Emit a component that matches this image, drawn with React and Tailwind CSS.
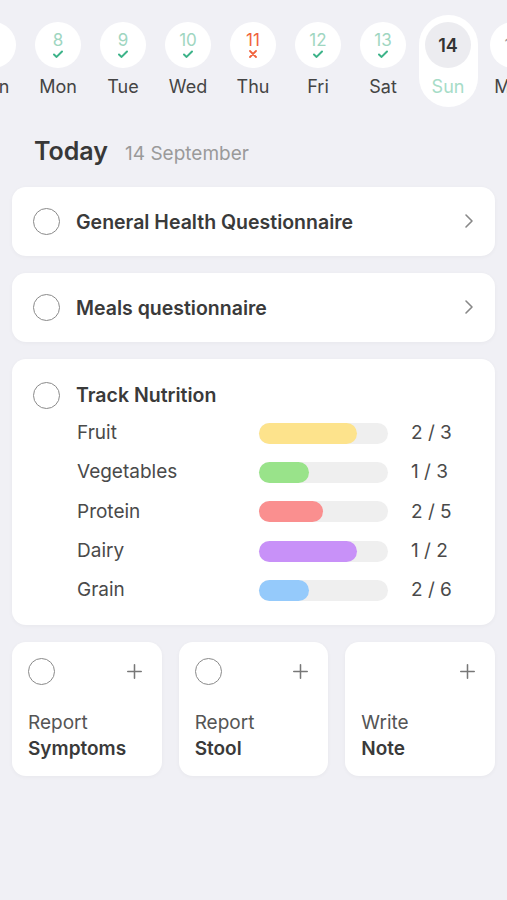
import { ChevronRight, Plus } from "lucide-react"

const days = [
  { n: 7, d: "Sun", state: "done" },
  { n: 8, d: "Mon", state: "done" },
  { n: 9, d: "Tue", state: "done" },
  { n: 10, d: "Wed", state: "done" },
  { n: 11, d: "Thu", state: "missed" },
  { n: 12, d: "Fri", state: "done" },
  { n: 13, d: "Sat", state: "done" },
  { n: 14, d: "Sun", state: "today" },
  { n: 15, d: "Mon", state: "future" },
]

const nutrition = [
  { name: "Fruit", fill: "w-[98px]", color: "bg-[#fde38c]", value: "2 / 3" },
  { name: "Vegetables", fill: "w-[50px]", color: "bg-[#99e38a]", value: "1 / 3" },
  { name: "Protein", fill: "w-[64px]", color: "bg-[#fa8f8f]", value: "2 / 5" },
  { name: "Dairy", fill: "w-[98px]", color: "bg-[#c891f8]", value: "1 / 2" },
  { name: "Grain", fill: "w-[50px]", color: "bg-[#95cafb]", value: "2 / 6" },
]

function Check() {
  return (
    <svg className="h-[10px] w-[12px]" viewBox="0 0 12 10" fill="none" stroke="#3db389" strokeWidth={2} strokeLinecap="round" strokeLinejoin="round">
      <path d="M2 5.5l2.6 2.4L10 2.5" />
    </svg>
  )
}

function Cross() {
  return (
    <svg className="h-[10px] w-[10px]" viewBox="0 0 10 10" fill="none" stroke="#f0623c" strokeWidth={1.8} strokeLinecap="round">
      <path d="M2 2l6 6M8 2l-6 6" />
    </svg>
  )
}

function Ring() {
  return <div className="h-[27px] w-[27px] shrink-0 rounded-full border-[1.5px] border-[#8a8a8a]" />
}

function Day({ day }) {
  if (day.state === "today") {
    return (
      <div className="flex w-[65px] shrink-0 justify-center pt-[15px]">
        <div className="flex h-[92px] w-[59px] flex-col items-center rounded-full bg-white pt-[7px]">
          <div className="grid h-[46px] w-[46px] place-items-center rounded-full bg-[#ececf0] text-[18px] font-semibold text-[#333]">
            {day.n}
          </div>
          <span className="mt-[5px] text-[18px] text-[#a6dcc7]">{day.d}</span>
        </div>
      </div>
    )
  }
  const numColor = day.state === "missed" ? "text-[#f0623c]" : day.state === "future" ? "text-[#999]" : "text-[#9fd6c1]"
  return (
    <div className="flex w-[65px] shrink-0 flex-col items-center pt-[22px]">
      <div className="flex h-[46px] w-[46px] flex-col items-center justify-center rounded-full bg-white">
        <span className={`text-[17px] leading-[18px] ${numColor}`}>{day.n}</span>
        {day.state === "done" && <Check />}
        {day.state === "missed" && <Cross />}
      </div>
      <span className="mt-[5px] text-[18px] text-[#444]">{day.d}</span>
    </div>
  )
}

function QuickCard({ top, bottom, ring }) {
  return (
    <div className="flex h-[134px] flex-1 flex-col rounded-[14px] bg-white px-[16px] pt-[16px] shadow-[0_1px_4px_rgba(0,0,0,0.04)]">
      <div className="flex h-[27px] items-center justify-between">
        {ring ? <Ring /> : <span />}
        <Plus className="h-[23px] w-[23px] text-[#777]" strokeWidth={1.6} />
      </div>
      <div className="mt-[25px] text-[19px] leading-[26px] text-[#555]">{top}</div>
      <div className="text-[19px] font-semibold leading-[26px] text-[#3a3a3a]">{bottom}</div>
    </div>
  )
}

export default function App() {
  return (
    <div className="min-h-[900px] w-[507px] overflow-hidden bg-[#f0f0f5]" style={{ fontFamily: "Inter, 'Liberation Sans', sans-serif" }}>
      <div className="ml-[-39.5px] flex h-[112px]">
        {days.map((d) => (
          <Day key={d.n} day={d} />
        ))}
      </div>

      <div className="flex items-baseline gap-[17px] px-[34px] pt-[21px]">
        <h1 className="text-[25px] font-semibold text-[#383838]">Today</h1>
        <span className="text-[19px] text-[#9a9a9a]">14 September</span>
      </div>

      <div className="mt-[16px] flex flex-col gap-[17px] px-[12px]">
        {["General Health Questionnaire", "Meals questionnaire"].map((t) => (
          <div key={t} className="flex h-[69px] items-center gap-[16px] rounded-[14px] bg-white pl-[21px] pr-[14px] shadow-[0_1px_4px_rgba(0,0,0,0.04)]">
            <Ring />
            <span className="flex-1 pt-[3px] text-[19.5px] font-semibold text-[#3a3a3a]">{t}</span>
            <ChevronRight className="h-[24px] w-[24px] text-[#888]" strokeWidth={1.6} />
          </div>
        ))}

        <div className="rounded-[14px] bg-white pb-[15px] pl-[21px] pr-[14px] pt-[22px] shadow-[0_1px_4px_rgba(0,0,0,0.04)]">
          <div className="flex items-center gap-[16px]">
            <Ring />
            <span className="text-[19.5px] font-semibold text-[#3a3a3a]">Track Nutrition</span>
          </div>
          <div className="mt-[4px] flex flex-col pl-[44px]">
            {nutrition.map((n) => (
              <div key={n.name} className="flex h-[39.3px] items-center">
                <span className="w-[182px] text-[19px] text-[#4a4a4a]">{n.name}</span>
                <div className="h-[21px] w-[129px] rounded-full bg-[#efefef]">
                  <div className={`h-full rounded-full ${n.fill} ${n.color}`} />
                </div>
                <span className="ml-[23px] text-[19px] text-[#4a4a4a]">{n.value}</span>
              </div>
            ))}
          </div>
        </div>

        <div className="flex gap-[17px]">
          <QuickCard top="Report" bottom="Symptoms" ring />
          <QuickCard top="Report" bottom="Stool" ring />
          <QuickCard top="Write" bottom="Note" />
        </div>
      </div>
    </div>
  )
}
